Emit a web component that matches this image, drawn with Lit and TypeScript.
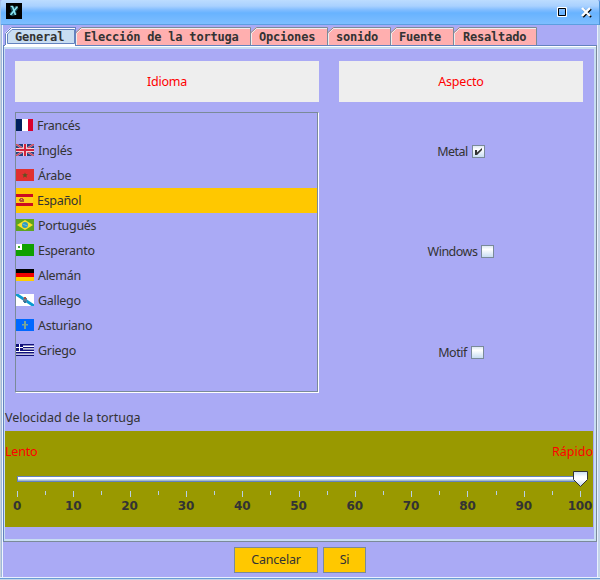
import { LitElement, html, css, svg } from "lit";
import { customElement, state } from "lit/decorators.js";
import { classMap } from "lit/directives/class-map.js";
import { styleMap } from "lit/directives/style-map.js";

const flags = {
  fr: svg`<path fill="#fff" d="M0 0h17v12H0z"/><path fill="#00205e" d="M0 0h6v12H0z"/><path fill="#d8002c" d="M12 0h5v12h-5z"/>`,
  gb: svg`<path fill="#253f7c" d="M0 0h18v12H0z"/><path stroke="#c9b4cc" stroke-width="2" d="M0 0l18 12M18 0L0 12"/><path stroke="#d83b4e" stroke-width="1.100" d="M0 0l18 12M18 0L0 12"/><path fill="#eccfd8" d="M7 0h4v12H7zM0 4h18v4H0z"/><path fill="#d2233c" d="M8 0h2v12H8zM0 5h18v2H0z"/>`,
  ma: svg`<path fill="#e03030" d="M0 0h18v12H0z"/><path fill="#5c5220" d="M9 3.500l.8 1.800h2L10.300 6.700l.7 2.100L9 7.500l-2 1.300.7-2.100L6.200 5.300h2z"/>`,
  es: svg`<path fill="#ffd018" d="M0 0h17v12H0z"/><path fill="#cc0c20" d="M0 0h17v3H0zM0 9h17v3H0z"/><path fill="#b5552a" d="M3 5h5v3H3zM4 4h3v1H4z"/><path fill="#e2a080" d="M5 5h1v1H5zM3 7h1v1H3z"/>`,
  br: svg`<path fill="#5fa51e" d="M0 0h18v12H0z"/><path fill="#fbe02a" d="M9 1l8 5-8 5-8-5z"/><circle cx="9" cy="6" r="3" fill="#2f9bc0"/><path stroke="#9fd0d8" stroke-width=".6" d="M6.500 5l5 2"/>`,
  eo: svg`<path fill="#10a000" d="M0 0h18v12H0z"/><path fill="#fff" d="M0 0h6v6H0z"/><path fill="#3aa82c" d="M2 2h2v2H2z"/>`,
  de: svg`<path d="M0 0h18v4H0z"/><path fill="#f00000" d="M0 4h18v4H0z"/><path fill="#ffcc00" d="M0 8h18v4H0z"/>`,
  gl: svg`<path fill="#fff" d="M0 0h18v12H0z"/><path stroke="#0a9bd0" stroke-width="2.800" d="M-1 -.7l20 13.400"/><path fill="#5f7f9c" d="M7 4h4v4H7z"/><path fill="#b05040" d="M8 3h2v2H8z"/><path fill="#31729a" d="M8 7h2v2H8z"/>`,
  as: svg`<path fill="#0068ff" d="M0 0h18v12H0z"/><path fill="#7aa596" d="M8 2h2v8H8zM6 5h6v1.500H6z"/>`,
  gr: svg`<path fill="#fff" d="M0 0h18v12H0z"/><path fill="#10107c" d="M0 0h18v1.500H0zM0 3h18v1.300H0zM0 5.500h18V7H0zM0 8h18v1.500H0zM0 10.700h18V12H0zM0 0h7v7H0z"/><path fill="#fff" d="M3 0h1v7H3zM0 3h7v1H0z"/>`,
};

const languages: [keyof typeof flags, string, number][] = [
  ["fr", "Francés", 17], ["gb", "Inglés", 18], ["ma", "Árabe", 18], ["es", "Español", 17], ["br", "Portugués", 18],
  ["eo", "Esperanto", 18], ["de", "Alemán", 18], ["gl", "Gallego", 18], ["as", "Asturiano", 18], ["gr", "Griego", 18],
];

const tabs: [string, number][] = [
  ["General", 71], ["Elección de la tortuga", 175], ["Opciones", 77], ["sonido", 63], ["Fuente", 63], ["Resaltado", 83],
];

@customElement("title-bar")
class TitleBar extends LitElement {
  static styles = css`
    :host { display: flex; height: 25px; box-sizing: border-box; align-items: flex-start; padding: 3px 7px 0 6px;
      background: linear-gradient(#bcdcff 0, #a9d1ff 6px, #80bcff 10px, #68b3ff 13px, #72b8ff 18px, #7dbeff 24px, #5c9fe0 24px, #5c9fe0 25px);
      border-radius: 2px 2px 0 0; border-left: 1px solid #a4c8ee; border-right: 1px solid #4c92d6; }
    .logo { margin-left: -1px; }
    .controls { margin-left: auto; display: flex; gap: 13px; padding-top: 4px; }
    svg { display: block; }
  `;
  render() {
    return html`
      <svg class="logo" width="16" height="16" viewBox="0 0 16 16"><path d="M0 0h16v16H0z"/>
        <path fill="none" stroke="#174a56" stroke-width="4" d="M6 4l3 8M11 4l-6 8"/><path fill="none" stroke="#8be4f2" stroke-width="1.600" d="M4.500 3.500h2l3 8.500M11.500 3.500L4.500 12"/></svg>
      <div class="controls">
        <svg width="11" height="11" viewBox="0 0 11 11"><path fill="none" stroke="#fff" d="M.5.500h9v9h-9z"/><path fill="none" stroke="#000" d="M1.500 1.500h7v7h-7z"/></svg>
        <svg width="11" height="11" viewBox="0 0 11 11"><path stroke="#000" stroke-width="2.200" d="M2 2l8 8M10 2l-8 8"/><path stroke="#fff" stroke-width="2.400" d="M1 1l8 8M9 1l-8 8"/></svg>
      </div>`;
  }
}

@customElement("speed-slider")
class SpeedSlider extends LitElement {
  static styles = css`
    :host { display: block; height: 96px; width: 588px; background: #999900; font: bold 12px "DejaVu Sans", sans-serif; }
    .ends { display: flex; justify-content: space-between; padding-top: 12px; height: 29px; color: #f00;
      font: 12.500px/17px "Noto Sans", sans-serif; letter-spacing: -.2px; }
    .ends span:last-child { letter-spacing: 0; }
    svg { display: block; overflow: visible; }
    text { text-anchor: middle; letter-spacing: -.1px; fill: #333; }
  `;
  render() {
    const steps = Array.from({ length: 21 }, (_, i) => i);
    return html`<div class="ends"><span>Lento</span><span>Rápido</span></div>
      <svg width="588" height="50" viewBox="0 0 588 50">
        <defs><linearGradient id="knob" x2="0" y2="1"><stop stop-color="#c8ddf2"/><stop offset=".35" stop-color="#fff"/><stop offset=".55" stop-color="#fff"/><stop offset="1" stop-color="#b8cfe5"/></linearGradient></defs>
        <path fill="#6382bf" d="M12 4h563v6H12z"/><path fill="#fff" d="M13 5h562v2H13z"/><path fill="#c8ddf2" d="M13 7h562v1H13z"/><path fill="#a3b8cc" d="M13 8h562v1H13z"/>
        ${steps.map((i) => svg`<rect fill="#b8cfe5" x=${Math.round(12 + i * 28.150)} y="19" width="1" height=${i % 2 ? 4 : 6} />`)}
        ${steps.filter((i) => i % 2 === 0).map((i) => svg`<text x=${12 + i * 28.150} y="38">${i * 5}</text>`)}
        <path fill="url(#knob)" stroke="#333" d="M568.500-.5h14v8l-7 7-7-7z"/>
      </svg>`;
  }
}

@customElement("app-root")
class AppRoot extends LitElement {
  @state() private selected = "es";
  @state() private look = "Metal";

  static styles = css`
    :host { display: flex; flex-direction: column; width: 600px; height: 580px; overflow: hidden; background: #aaaaf5;
      font: 12.500px/17px "Noto Sans", sans-serif; color: #333; }
    .frame { flex: 1; display: flex; flex-direction: column; border-left: 1px solid #c8d0dc; border-right: 2px solid #c4d4e8; box-shadow: inset 1px 0 #9cb8d8, inset 2px 0 #f0f6ff, inset -1px 0 #e8f0ff;
      padding: 2px 1px 0 2px; }
    .tabs { display: flex; height: 18px; padding-left: 2px; }
    .tab { position: relative; box-sizing: border-box; height: 18px; padding-left: 8px; font: bold 12px/21px "DejaVu Sans Mono", monospace; letter-spacing: -.2px; white-space: pre; }
    .tab:last-child { padding-left: 9px; }
    .tab.active { padding-left: 10px; z-index: 1; }
    .shape { position: absolute; left: 0; top: 0; overflow: visible; }
    .label { position: relative; }
    .panel { box-sizing: border-box; width: 594px; height: 497px; border: 1px solid #6382bf; border-right-color: #7a8a99; border-bottom-color: #7a8a99;
      box-shadow: inset 0 1px #fff, inset 0 3px #c8ddf2, inset 1px 0 #c8ddf2, inset -2px 0 #c8ddf2, inset 0 -2px #c8ddf2; padding: 3px 0 0 1px; display: flex; flex-direction: column; }
    .columns { display: grid; grid-template-columns: 304px 244px; gap: 20px; padding: 12px 0 0 10px; height: 343px; }
    .heading { height: 41px; line-height: 41px; background: #eee; color: #f00; text-align: center; letter-spacing: -.2px; }
    .list { margin-top: 10px; box-sizing: border-box; width: 304px; height: 281px; border: 1px solid #7a8a99; border-right-color: #fff; border-bottom-color: #fff; box-shadow: inset -1px -1px #7a8a99; letter-spacing: -.3px; }
    .item { display: flex; align-items: center; height: 25px; gap: 4px; margin-right: 1px; }
    .item.selected { background: #ffc800; }
    .item svg { display: block; margin-top: -1px; overflow: hidden; }
    .looks { display: grid; grid-template-rows: 99px 101px 101px; letter-spacing: -.5px; }
    .look { display: flex; justify-content: center; align-items: center; gap: 4px; }
    .box { box-sizing: border-box; width: 13px; height: 13px; border: 1px solid #7a8a99; background: linear-gradient(#dde8f3, #fff 30%, #c8ddf2); }
    .box svg { display: block; }
    .caption { height: 27px; line-height: 27px; }
    .buttons { display: flex; justify-content: center; gap: 5px; padding-top: 5px; }
    .button { box-sizing: border-box; height: 26px; width: 43px; border: 1px solid #7a8a99; background: #ffc800; line-height: 24px; text-align: center; letter-spacing: -.2px; }
    .button.wide { width: 84px; }
    .base { height: 3px; box-sizing: border-box; border-top: 1px solid #e8f0ff; border-bottom: 1px solid #c4d4e8; background: #6a9cd4; }
  `;

  private tabShape(w: number, active: boolean) {
    return active
      ? html`<svg class="shape" width=${w} height="20" viewBox="0 0 ${w} 20">
          <path fill="#fff" d="M0 20V6l6-6h${w - 6}v20z"/><path fill="#c8ddf2" d="M1 20h${w - 1}v2H1z"/>
          <path fill="none" stroke="#6382bf" d="M.5 18V6.500l6-6H${w}"/>
          <path fill="#c8ddf2" stroke="#6382bf" d="M2.500 16.500V7l4.500-4.500h${w - 8.500}v14z"/><path fill="#6382bf" d="M${w - 1} 1h1v18h-1z"/></svg>`
      : html`<svg class="shape" width=${w} height="18" viewBox="0 0 ${w} 18">
          <path fill="#ffafaf" d="M0 18V5l5-5h${w - 5}v18z"/><path fill="none" stroke="#eee" d="M.5 18V6.500l5-5h${w - 6.500}"/>
          <path fill="none" stroke="#7a8a99" d="M0 5.500L5.500.500h${w - 6}V18"/></svg>`;
  }

  render() {
    return html`
      <title-bar></title-bar>
      <div class="frame">
        <div class="tabs">${tabs.map(([name, width], i) => html`<div class=${classMap({ tab: true, active: i === 0 })} style=${styleMap({ width: `${width}px` })}>${this.tabShape(width, i === 0)}<span class="label">${name}</span></div>`)}</div>
        <div class="panel">
          <div class="columns">
            <div><div class="heading">Idioma</div>
              <div class="list">${languages.map(([code, name, w]) => html`
                <div class=${classMap({ item: true, selected: code === this.selected })} @click=${() => (this.selected = code)}>
                  <svg width=${w} height="12" viewBox="0 0 ${w} 12">${flags[code]}</svg><span>${name}</span></div>`)}</div>
            </div>
            <div><div class="heading">Aspecto</div>
              <div class="looks">${["Metal", "Windows", "Motif"].map((name) => html`
                <div class="look" @click=${() => (this.look = name)}><span>${name}</span><span class="box">${name === this.look
                  ? html`<svg width="11" height="11" viewBox="0 0 11 11"><path fill="#333" d="M2 4h2v2.500L9 2v2L4 9H2z"/></svg>` : ""}</span></div>`)}</div>
            </div>
          </div>
          <div class="caption">Velocidad de la tortuga</div>
          <speed-slider></speed-slider>
        </div>
        <div class="buttons"><div class="button wide">Cancelar</div><div class="button">Si</div></div>
      </div>
      <div class="base"></div>`;
  }
}
